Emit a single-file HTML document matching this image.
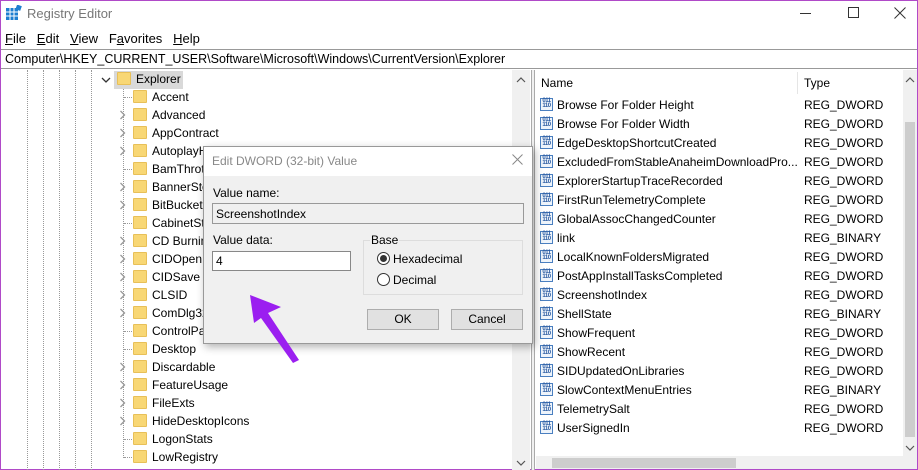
<!DOCTYPE html>
<html><head><style>
*{margin:0;padding:0;box-sizing:border-box}
body{width:918px;height:470px;overflow:hidden;background:#fff;font-family:"Liberation Sans",sans-serif;font-size:12px;color:#000;position:relative}
.abs{position:absolute}
.win{position:absolute;left:0;top:0;width:918px;height:470px;border:1px solid #b04ac8}
.t{position:absolute;white-space:nowrap}
.dl{position:absolute;width:0;border-left:1px dotted #999}
.fold{position:absolute;width:14px;height:13px;background:#f8d775;border:1px solid #e8c058;border-radius:1px}
.ico{position:absolute;width:13px;height:13px;border:1px solid #4a7fc0;background:#eef4fb;font-size:6px;line-height:5px;color:#2a5aa0;text-align:center;font-weight:bold;letter-spacing:-0.5px}
.btn{position:absolute;background:#e1e1e1;border:1px solid #adadad;text-align:center;line-height:19px}
</style></head><body>
<div class="win"></div>
<svg class="abs" style="left:6px;top:5px" width="16" height="16"><rect x="0" y="3" width="12" height="12" fill="#1e7fd0"/><g stroke="#fff" stroke-width="1"><line x1="4" y1="3" x2="4" y2="15"/><line x1="8" y1="3" x2="8" y2="15"/><line x1="0" y1="7" x2="12" y2="7"/><line x1="0" y1="11" x2="12" y2="11"/></g><rect x="10" y="0" width="5" height="5" fill="#1e7fd0" transform="rotate(20 12 3)"/></svg>
<div class="t" style="left:27px;top:6px;font-size:13px;color:#777">Registry Editor</div>
<div class="abs" style="left:800px;top:13px;width:11px;border-top:1px solid #333"></div>
<div class="abs" style="left:848px;top:7px;width:11px;height:11px;border:1px solid #333"></div>
<svg class="abs" style="left:894px;top:7px" width="12" height="12"><path d="M0.5 0.5L11.5 11.5M11.5 0.5L0.5 11.5" stroke="#333" stroke-width="1"/></svg>
<div class="t" style="left:5px;top:31px;font-size:13px"><u>F</u>ile &nbsp;&nbsp;<u>E</u>dit &nbsp;&nbsp;<u>V</u>iew &nbsp;&nbsp;F<u>a</u>vorites &nbsp;&nbsp;<u>H</u>elp</div>
<div class="abs" style="left:1px;top:49px;width:916px;height:20px;border-top:1px solid #999;border-bottom:1px solid #999"></div>
<div class="t" style="left:5px;top:52px;font-size:12.5px">Computer\HKEY_CURRENT_USER\Software\Microsoft\Windows\CurrentVersion\Explorer</div>
<div class="dl" style="left:27px;top:70px;height:400px"></div>
<div class="dl" style="left:43px;top:70px;height:400px"></div>
<div class="dl" style="left:59px;top:70px;height:400px"></div>
<div class="dl" style="left:75px;top:70px;height:400px"></div>
<div class="dl" style="left:91px;top:70px;height:400px"></div>
<div class="dl" style="left:123px;top:88px;height:370px"></div>
<div class="abs" style="left:114px;top:71px;width:69px;height:18px;background:#d9d9d9"></div>
<svg class="abs" style="left:101px;top:76px" width="10" height="8"><path d="M1 2L5 6L9 2" stroke="#333" stroke-width="1.3" fill="none"/></svg>
<div class="fold" style="left:117px;top:72px"></div>
<div class="t" style="left:136px;top:72px">Explorer</div>
<div id="tree"></div>
<div class="abs" style="left:512px;top:70px;width:18px;height:400px;background:#f0f0f0"></div>
<svg class="abs" style="left:516px;top:76px" width="10" height="8"><path d="M1 6L5 2L9 6" stroke="#555" stroke-width="1.2" fill="none"/></svg>
<svg class="abs" style="left:516px;top:459px" width="10" height="8"><path d="M1 2L5 6L9 2" stroke="#555" stroke-width="1.2" fill="none"/></svg>
<div class="abs" style="left:531px;top:70px;width:4px;height:400px;background:#f0f0f0;border-left:1px solid #aaa;border-right:1px solid #aaa"></div>
<div class="t" style="left:541px;top:76px">Name</div>
<div class="abs" style="left:797px;top:72px;height:22px;border-left:1px solid #e5e5e5"></div>
<div class="t" style="left:804px;top:76px">Type</div>
<div id="list"></div>
<div class="abs" style="left:903px;top:70px;width:14px;height:386px;background:#f0f0f0"></div>
<div class="abs" style="left:905px;top:122px;width:10px;height:315px;background:#cdcdcd"></div>
<svg class="abs" style="left:905px;top:76px" width="10" height="8"><path d="M1 6L5 2L9 6" stroke="#555" stroke-width="1.2" fill="none"/></svg>
<svg class="abs" style="left:905px;top:444px" width="10" height="8"><path d="M1 2L5 6L9 2" stroke="#555" stroke-width="1.2" fill="none"/></svg>
<div class="abs" style="left:536px;top:456px;width:381px;height:13px;background:#f0f0f0"></div>
<div class="abs" style="left:552px;top:458px;width:184px;height:10px;background:#cdcdcd"></div>
<div class="abs" style="left:203px;top:146px;width:330px;height:198px;background:#f0f0f0;border:1px solid #999;box-shadow:2px 3px 8px rgba(0,0,0,.3)"></div>
<div class="abs" style="left:204px;top:147px;width:328px;height:29px;background:#fff"></div>
<div class="t" style="left:212px;top:154px;color:#888">Edit DWORD (32-bit) Value</div>
<svg class="abs" style="left:512px;top:154px" width="11" height="11"><path d="M0.5 0.5L10.5 10.5M10.5 0.5L0.5 10.5" stroke="#888" stroke-width="1"/></svg>
<div class="t" style="left:213px;top:186px">Value name:</div>
<div class="abs" style="left:212px;top:203px;width:312px;height:21px;background:#f0f0f0;border:1px solid #999"></div>
<div class="t" style="left:216px;top:207px">ScreenshotIndex</div>
<div class="t" style="left:213px;top:233px">Value data:</div>
<div class="abs" style="left:212px;top:251px;width:139px;height:20px;background:#fff;border:1px solid #888"></div>
<div class="t" style="left:216px;top:254px">4</div>
<div class="abs" style="left:363px;top:240px;width:160px;height:55px;border:1px solid #ddd"></div>
<div class="t" style="left:370px;top:233px;background:#f0f0f0;padding:0 1px">Base</div>
<div class="abs" style="left:377px;top:252px;width:13px;height:13px;border:1px solid #333;border-radius:50%;background:#fff"></div>
<div class="abs" style="left:380px;top:255px;width:7px;height:7px;border-radius:50%;background:#333"></div>
<div class="t" style="left:393px;top:252px">Hexadecimal</div>
<div class="abs" style="left:377px;top:273px;width:13px;height:13px;border:1px solid #333;border-radius:50%;background:#fff"></div>
<div class="t" style="left:393px;top:273px">Decimal</div>
<div class="btn" style="left:367px;top:309px;width:72px;height:21px">OK</div>
<div class="btn" style="left:451px;top:309px;width:72px;height:21px">Cancel</div>
<svg class="abs" style="left:0;top:0" width="918" height="470"><polygon points="250,295 281,307 268,313 299,360 293,363 261,318 254,323" fill="#9b1ff0"/></svg>
<script>
var tr=[["Accent",0],["Advanced",1],["AppContract",1],["AutoplayHandlers",1],["BamThrottling",0],["BannerStore",1],["BitBucket",1],["CabinetState",0],["CD Burning",1],["CIDOpen",1],["CIDSave",1],["CLSID",1],["ComDlg32",1],["ControlPanel",0],["Desktop",0],["Discardable",1],["FeatureUsage",1],["FileExts",1],["HideDesktopIcons",1],["LogonStats",0],["LowRegistry",0]];
var h="";tr.forEach(function(r,i){var y=90+i*18;
h+=r[1]?'<svg class="abs" style="left:119px;top:'+(y+2)+'px" width="7" height="10"><path d="M1.5 1L5.5 5L1.5 9" stroke="#999" stroke-width="1.3" fill="none"/></svg>':'<div class="abs" style="left:124px;top:'+(y+7)+'px;width:8px;border-top:1px dotted #999"></div>';
h+='<div class="fold" style="left:133px;top:'+(y)+'px"></div><div class="t" style="left:152px;top:'+y+'px">'+r[0]+'</div>';});
document.getElementById("tree").innerHTML=h;
var L=[["Browse For Folder Height","REG_DWORD"],["Browse For Folder Width","REG_DWORD"],["EdgeDesktopShortcutCreated","REG_DWORD"],["ExcludedFromStableAnaheimDownloadPro...","REG_DWORD"],["ExplorerStartupTraceRecorded","REG_DWORD"],["FirstRunTelemetryComplete","REG_DWORD"],["GlobalAssocChangedCounter","REG_DWORD"],["link","REG_BINARY"],["LocalKnownFoldersMigrated","REG_DWORD"],["PostAppInstallTasksCompleted","REG_DWORD"],["ScreenshotIndex","REG_DWORD"],["ShellState","REG_BINARY"],["ShowFrequent","REG_DWORD"],["ShowRecent","REG_DWORD"],["SIDUpdatedOnLibraries","REG_DWORD"],["SlowContextMenuEntries","REG_BINARY"],["TelemetrySalt","REG_DWORD"],["UserSignedIn","REG_DWORD"]];
h="";L.forEach(function(r,i){var y=98+i*19;
h+='<div class="ico" style="left:540px;top:'+(y)+'px">011<br>110</div><div class="t" style="left:557px;top:'+y+'px">'+r[0]+'</div><div class="t" style="left:804px;top:'+y+'px">'+r[1]+'</div>';});
document.getElementById("list").innerHTML=h;
</script>
</body></html>
